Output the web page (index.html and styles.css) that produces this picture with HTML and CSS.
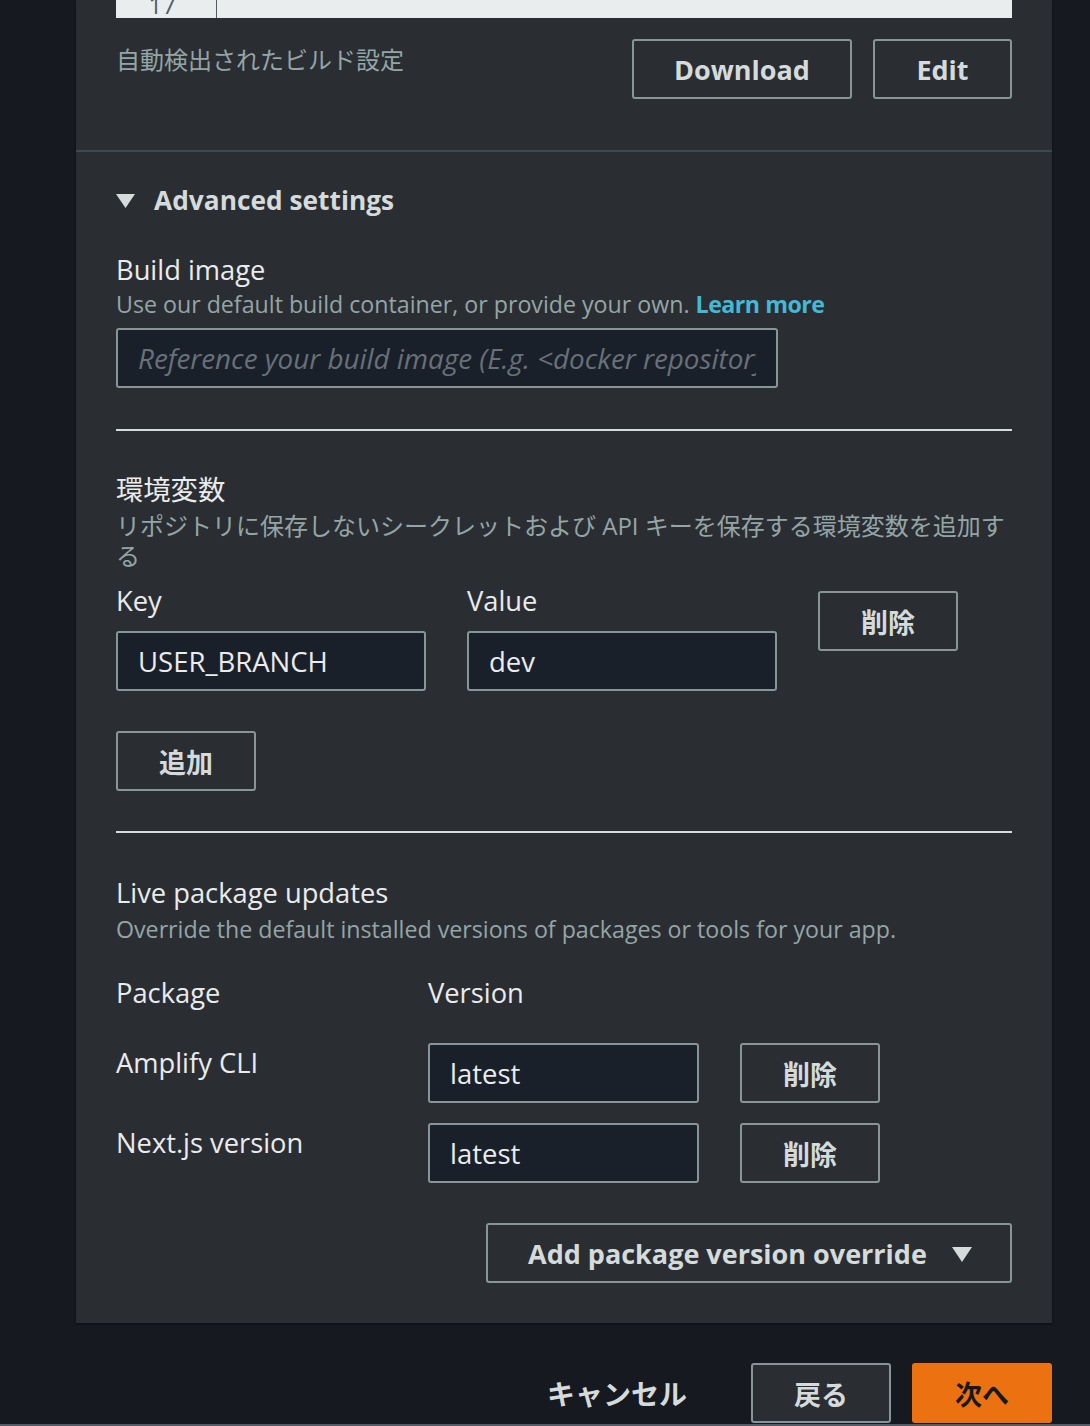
FILE: index.html
```html
<!DOCTYPE html>
<html lang="ja">
<head>
<meta charset="utf-8">
<title>Build settings</title>
<link rel="stylesheet" href="styles.css">
</head>
<body>
<div class="page">
  <div class="card">
    <section class="top">
      <div class="code">
        <div class="gutter"><span class="ln">17</span></div>
        <div class="code-body"></div>
      </div>
      <div class="build-row">
        <span class="ja-muted">自動検出されたビルド設定</span>
        <div class="btn-group">
          <button class="btn btn-download">Download</button>
          <button class="btn btn-edit">Edit</button>
        </div>
      </div>
    </section>
    <section class="advanced">
      <div class="adv-title">
        <svg class="caret" width="19" height="14" viewBox="0 0 19 14"><polygon points="0,0 19,0 9.5,14" fill="#d5dbdb"/></svg>
        <span>Advanced settings</span>
      </div>

      <div class="label label-build">Build image</div>
      <div class="desc">Use our default build container, or provide your own. <a class="link" href="#">Learn more</a></div>
      <div class="input input-wide"><span class="placeholder">Reference your build image (E.g. &lt;docker repository&gt;)</span></div>

      <hr class="rule rule-1">

      <div class="label label-env">環境変数</div>
      <div class="desc desc-ja">リポジトリに保存しないシークレットおよび API キーを保存する環境変数を追加する</div>

      <div class="env-grid">
        <div class="env-col">
          <div class="label">Key</div>
          <div class="input input-half">USER_BRANCH</div>
        </div>
        <div class="env-col">
          <div class="label">Value</div>
          <div class="input input-half">dev</div>
        </div>
        <button class="btn btn-small btn-env-del">削除</button>
      </div>
      <button class="btn btn-small btn-add">追加</button>

      <hr class="rule rule-2">

      <div class="label label-live">Live package updates</div>
      <div class="desc desc-live">Override the default installed versions of packages or tools for your app.</div>

      <div class="pkg-head">
        <span class="pkg-name label">Package</span>
        <span class="label">Version</span>
      </div>
      <div class="pkg-row pkg-row-first">
        <span class="pkg-name pkg-label">Amplify CLI</span>
        <div class="input input-ver">latest</div>
        <button class="btn btn-small">削除</button>
      </div>
      <div class="pkg-row">
        <span class="pkg-name pkg-label">Next.js version</span>
        <div class="input input-ver">latest</div>
        <button class="btn btn-small">削除</button>
      </div>
      <div class="override-row">
        <button class="btn btn-override">Add package version override
          <svg class="caret-small" width="20" height="15" viewBox="0 0 20 15"><polygon points="0,0 20,0 10,15" fill="#d5dbdb"/></svg>
        </button>
      </div>
    </section>
  </div>
  <footer class="footer">
    <button class="btn-cancel">キャンセル</button>
    <button class="btn btn-small btn-back">戻る</button>
    <button class="btn btn-small btn-next">次へ</button>
  </footer>
  <div class="bottom-line"></div>
</div>
</body>
</html>
```

FILE: styles.css
```css
* { box-sizing: border-box; }
html, body {
  margin: 0;
  padding: 0;
  background: #16191f;
  height: 1426px;
  overflow: hidden;
}
body {
  font-family: "Open Sans", "Noto Sans CJK JP", sans-serif;
  color: #d5dbdb;
}
.page { width: 1090px; }
.card {
  margin-left: 76px;
  width: 976px;
  background: #2a2e33;
  box-shadow: 0 1px 2px rgba(0,0,0,0.5);
}
.top {
  padding: 0 40px 51px;
  border-bottom: 2px solid #414750;
}
.code {
  height: 18px;
  display: flex;
  background: #eaeded;
  overflow: hidden;
}
.gutter {
  width: 101px;
  border-right: 1px solid #545b64;
  text-align: right;
  padding-right: 40px;
}
.ln {
  display: block;
  font-size: 24px;
  line-height: 24px;
  margin-top: -7px;
  color: #545b64;
}
.code-body { flex: 1; }
.build-row {
  margin-top: 21px;
  display: flex;
  justify-content: space-between;
  align-items: flex-start;
}
.ja-muted {
  font-size: 24px;
  line-height: 42px;
  color: #95a5a6;
}
.btn-group { display: flex; gap: 21px; }
.btn {
  font-family: "Open Sans", "Noto Sans CJK JP", sans-serif;
  height: 60px;
  border: 2px solid #879596;
  border-radius: 3px;
  background: transparent;
  color: #d5dbdb;
  font-size: 27px;
  font-weight: 700;
  padding: 0 38px;
  display: inline-flex;
  align-items: center;
  justify-content: center;
  cursor: pointer;
}
.btn-download { width: 220px; }
.btn-edit { width: 139px; }

.advanced { padding: 30px 40px 40px; }
.adv-title {
  display: flex;
  align-items: center;
  gap: 19px;
  height: 36px;
  font-size: 26.3px;
  font-weight: 700;
}
.caret { margin-top: 2px; }
.label {
  font-size: 27.3px;
  line-height: 34px;
  color: #e9ebed;
}
.label-build { margin-top: 35px; }
.desc {
  font-size: 23.2px;
  line-height: 34px;
  color: #95a5a6;
}
.link {
  color: #44b9d6;
  font-weight: 700;
  text-decoration: none;
  letter-spacing: -0.5px;
}
.input {
  height: 60px;
  border: 2px solid #879596;
  border-radius: 3px;
  background: #1a2029;
  padding: 0 20px;
  display: flex;
  align-items: center;
  font-size: 27.5px;
  color: #e9ebed;
  white-space: nowrap;
  overflow: hidden;
}
.input-wide { width: 662px; margin-top: 7px; }
.placeholder {
  display: block;
  width: 100%;
  overflow: hidden;
  font-style: italic;
  color: #687078;
  font-size: 27.8px;
  line-height: 36px;
}
.rule {
  border: 0;
  height: 2px;
  background: #d5dbdb;
  margin: 41px 0 0;
}
.label-env { margin-top: 42px; }
.desc-ja {
  font-size: 24px;
  line-height: 30px;
  margin-top: 4px;
}
.env-grid {
  margin-top: 13px;
  display: flex;
  gap: 41px;
  align-items: flex-start;
}
.env-col { width: 310px; }
.env-col .input { margin-top: 13px; }
.input-half { width: 310px; }
.btn-small { width: 140px; padding: 0; }
.btn-env-del { margin-top: 7px; }
.btn-add { margin-top: 40px; }
.rule-2 { margin-top: 40px; }
.label-live { margin-top: 43px; }
.desc-live { margin-top: 2px; }
.pkg-head {
  margin-top: 30px;
  display: flex;
}
.pkg-name { width: 312px; flex: none; }
.pkg-row {
  display: flex;
  align-items: flex-start;
  margin-top: 20px;
}
.pkg-row-first { margin-top: 33px; }
.pkg-label {
  font-size: 27.3px;
  line-height: 40px;
  color: #e9ebed;
}
.input-ver { width: 271px; margin-right: 41px; }
.override-row {
  margin-top: 40px;
  display: flex;
  justify-content: flex-end;
}
.btn-override {
  width: 526px;
  padding: 0 38px 0 40px;
  justify-content: space-between;
}
.caret-small { margin-top: 2px; }

.footer {
  margin-top: 40px;
  width: 1052px;
  display: flex;
  justify-content: flex-end;
  gap: 21px;
}
.btn-cancel {
  font-family: "Open Sans", "Noto Sans CJK JP", sans-serif;
  background: transparent;
  border: 0;
  color: #d5dbdb;
  font-size: 28px;
  font-weight: 700;
  height: 60px;
  padding: 0 43px;
}
.btn-back { background: #2a2e33; }
.btn-next {
  background: #ec7211;
  border-color: #ec7211;
  color: #16191f;
}
.bottom-line {
  margin-top: 1px;
  height: 4px;
  background: #545b64;
}
```
